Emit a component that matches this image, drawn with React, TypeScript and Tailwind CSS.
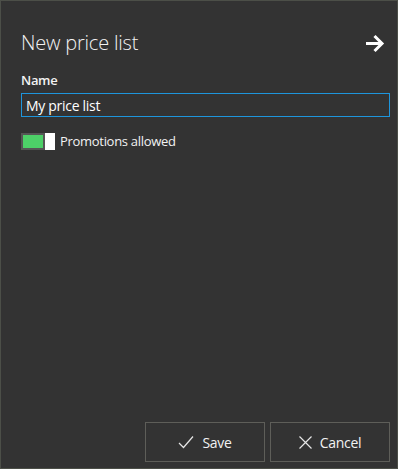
import { useState } from "react";

const font = { fontFamily: '"Open Sans", "Noto Sans", sans-serif' };

const ArrowIcon = () => (
  <svg width="20" height="19" viewBox="0 0 20 19" fill="none">
    <path d="M1 9.5h16M9.5 2l7.5 7.5L9.5 17" stroke="white" strokeWidth="3" />
  </svg>
);

const CheckIcon = () => (
  <svg width="16" height="14" viewBox="0 0 16 14" fill="none">
    <path d="M1 8l4.5 4.5L15 1.5" stroke="#e6e6e6" strokeWidth="1.2" />
  </svg>
);

const CrossIcon = () => (
  <svg width="13" height="13" viewBox="0 0 13 13" fill="none">
    <path d="M0.5 0.5l12 12M12.5 0.5l-12 12" stroke="#e6e6e6" strokeWidth="1.2" />
  </svg>
);

export default function App() {
  const [name, setName] = useState("My price list");
  const [promotions, setPromotions] = useState(true);

  return (
    <div
      className="w-[398px] h-[469px] border border-[#4c4f48] bg-[#333333] flex flex-col text-white"
      style={font}
    >
      <div className="flex items-center justify-between pl-[20px] pr-[12px] pt-[28px]">
        <h1 className="text-[20px] leading-[28px] font-light tracking-[-0.2px] text-[#f2f2f2]">New price list</h1>
        <button className="flex items-center">
          <ArrowIcon />
        </button>
      </div>

      <div className="flex flex-col pl-[20px] pr-[7px] pt-[14px]">
        <label className="text-[13px] leading-[18px] font-semibold tracking-[-0.3px] text-[#f2f2f2]">Name</label>
        <input
          value={name}
          onChange={(e) => setName(e.target.value)}
          className="mt-[4px] h-[24px] border border-[#1e95dc] bg-transparent px-[4px] text-[14px] tracking-[-0.3px] text-white outline-none"
        />

        <div className="mt-[15px] flex items-center gap-[5px]">
          <button
            onClick={() => setPromotions(!promotions)}
            className="flex items-stretch h-[17px] w-[34px]"
          >
            <span className="flex-1 border-2 border-[#555555] bg-[#4dd068]" />
            <span className="w-[10px] bg-white" />
          </button>
          <span className="text-[13px] leading-[18px] tracking-[-0.3px] text-[#f2f2f2]">Promotions allowed</span>
        </div>
      </div>

      <div className="mt-auto flex justify-end gap-[5px] pr-[7px] pb-[6px]">
        <button className="flex h-[40px] w-[120px] items-center justify-center gap-[8px] border border-[#5e5e59] text-[14px] tracking-[-0.3px] text-[#f2f2f2]">
          <CheckIcon />
          Save
        </button>
        <button className="flex h-[40px] w-[120px] items-center justify-center gap-[8px] border border-[#5e5e59] text-[14px] tracking-[-0.3px] text-[#f2f2f2]">
          <CrossIcon />
          Cancel
        </button>
      </div>
    </div>
  );
}
